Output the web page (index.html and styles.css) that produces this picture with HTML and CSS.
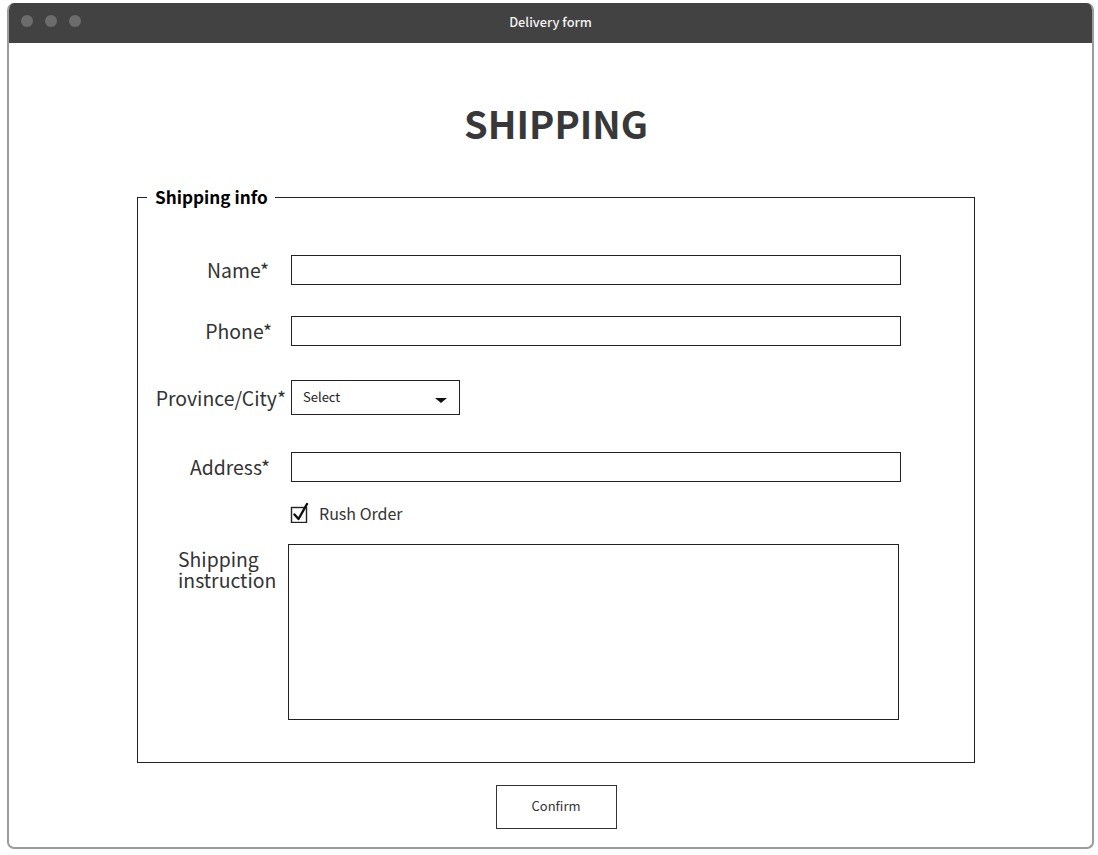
FILE: index.html
```html
<!DOCTYPE html>
<html lang="en">
<head>
<meta charset="utf-8">
<title>Delivery form</title>
<link rel="stylesheet" href="styles.css">
</head>
<body>
<div class="window">
  <header class="titlebar">
    <div class="dots"><span class="dot"></span><span class="dot"></span><span class="dot"></span></div>
    <div class="title">Delivery form</div>
  </header>
  <main class="content">
    <h1 class="heading">SHIPPING</h1>
    <fieldset class="panel">
      <legend class="legend">Shipping info</legend>
      <div class="row row-name">
        <label class="label pad-name">Name*</label>
        <input class="field" type="text">
      </div>
      <div class="row row-phone">
        <label class="label pad-phone">Phone*</label>
        <input class="field" type="text">
      </div>
      <div class="row row-province">
        <label class="label pad-province">Province/City*</label>
        <div class="select"><span class="select-text">Select</span><span class="caret"></span></div>
      </div>
      <div class="row row-address">
        <label class="label pad-address">Address*</label>
        <input class="field" type="text">
      </div>
      <div class="row row-check">
        <span class="label"></span>
        <div class="check">
          <svg class="check-icon" width="20" height="22" viewBox="0 0 20 22">
            <rect x="1.5" y="6.5" width="15" height="15" fill="none" stroke="#222" stroke-width="1.4"/>
            <path d="M4.5 13.5 L8.5 18 L17 3" fill="none" stroke="#111" stroke-width="2.4" stroke-linecap="round" stroke-linejoin="round"/>
          </svg>
          <span class="check-text">Rush Order</span>
        </div>
      </div>
      <div class="row row-instr">
        <label class="label-instr">Shipping<br>instruction</label>
        <textarea class="area"></textarea>
      </div>
    </fieldset>
    <div class="actions">
      <button class="btn" type="button">Confirm</button>
    </div>
  </main>
</div>
</body>
</html>
```
FILE: styles.css
```css
html, body {
  margin: 0;
  padding: 0;
  background: #ffffff;
}
body {
  font-family: "Noto Sans CJK JP", "Source Sans Pro", "Noto Sans", sans-serif;
  color: #333;
}
.window {
  margin: 3px 0 0 7px;
  width: 1087px;
  height: 846px;
  box-sizing: border-box;
  border: 2px solid #9c9c9c;
  border-top: none;
  border-radius: 7px;
  overflow: hidden;
  display: flex;
  flex-direction: column;
}
.titlebar {
  height: 40px;
  background: #424242;
  position: relative;
  display: flex;
  align-items: center;
  justify-content: center;
  margin: 0 -2px;
  flex: none;
  box-sizing: border-box;
  padding-bottom: 3px;
}
.dots {
  position: absolute;
  left: 14px;
  top: 12px;
  display: flex;
  gap: 12px;
}
.dot {
  width: 12px;
  height: 12px;
  border-radius: 50%;
  background: #6c6c6c;
}
.title {
  color: #f2f2f2;
  font-size: 12.8px;
  font-weight: 500;
}
.content {
  width: 838px;
  margin-left: 128px;
  display: flex;
  flex-direction: column;
}
.heading {
  margin: 56px 0 39px;
  text-align: center;
  font-size: 38px;
  line-height: 48px;
  font-weight: 700;
  color: #383838;
}
.panel {
  margin: 0;
  padding: 47px 0 42px;
  border: 1px solid #222;
  min-width: 0;
}
.legend {
  margin-left: 9px;
  padding: 0 7px 0 8px;
  font-size: 17.2px;
  line-height: 22px;
  font-weight: 700;
  color: #000;
}
.row {
  display: flex;
  align-items: center;
}
.row-phone { margin-top: 31px; }
.row-province { margin-top: 34px; }
.row-address { margin-top: 37px; }
.row-check { margin-top: 23px; }
.row-instr { margin-top: 21px; align-items: flex-start; }
.label {
  width: 153px;
  flex: none;
  box-sizing: border-box;
  text-align: right;
  font-size: 19.4px;
  line-height: 24px;
  color: #333;
}
.pad-name { padding-right: 22px; }
.pad-phone { padding-right: 19px; }
.pad-province { padding-right: 5px; }
.pad-address { padding-right: 21px; }
.field {
  width: 610px;
  height: 30px;
  box-sizing: border-box;
  border: 1px solid #222;
  margin: 0;
  padding: 0 8px;
  font: inherit;
  background: #fff;
}
.select {
  width: 169px;
  height: 35px;
  box-sizing: border-box;
  border: 1px solid #222;
  display: flex;
  align-items: center;
  justify-content: space-between;
  padding: 0 12px 0 11px;
}
.select-text {
  font-size: 13px;
  color: #222;
  margin-top: -2px;
}
.caret {
  width: 0;
  height: 0;
  border-left: 6px solid transparent;
  border-right: 6px solid transparent;
  border-top: 5px solid #111;
  margin-top: 5px;
}
.check {
  display: flex;
  align-items: flex-end;
  gap: 9px;
  margin-top: -4px;
}
.check-icon {
  display: block;
  margin-left: -1px;
}
.check-text {
  font-size: 16px;
  line-height: 20px;
  color: #333;
}
.label-instr {
  width: 150px;
  flex: none;
  box-sizing: border-box;
  padding-left: 40px;
  margin-top: 4px;
  font-size: 19.4px;
  line-height: 21px;
  color: #333;
}
.area {
  width: 611px;
  height: 176px;
  box-sizing: border-box;
  border: 1px solid #222;
  margin: 0;
  padding: 6px;
  resize: none;
  font: inherit;
  display: block;
}
.actions {
  display: flex;
  justify-content: center;
  margin-top: 22px;
}
.btn {
  width: 121px;
  height: 44px;
  box-sizing: border-box;
  border: 1px solid #333;
  background: #fff;
  font-family: inherit;
  font-size: 13px;
  color: #333;
  padding: 0 0 3px;
}
```
